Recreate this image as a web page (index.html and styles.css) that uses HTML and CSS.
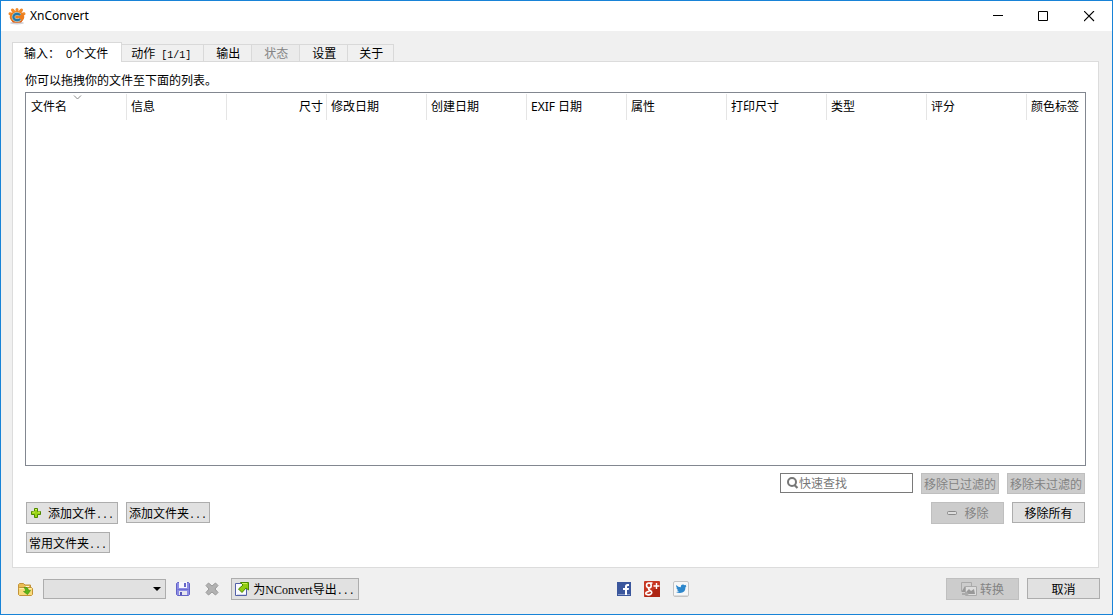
FILE: index.html
```html
<!DOCTYPE html>
<html lang="zh-CN">
<head>
<meta charset="utf-8">
<meta name="viewport" content="width=device-width, initial-scale=1">
<title>XnConvert</title>
<link rel="stylesheet" href="styles.css">
</head>
<body>
<div class="window">
  <header class="titlebar">
    <svg class="app-icon" width="18" height="18" viewBox="0 0 18 18" aria-hidden="true">
      <ellipse cx="9" cy="16" rx="7" ry="1.5" fill="#d3d3d8"/>
      <g stroke="#f08a2a" stroke-width="3" stroke-linecap="round"><path d="M9 9V2.500M9 9L4.500 3M9 9L13.500 3M9 9L2 6.800M9 9L16 6.800"/></g>
      <ellipse cx="9" cy="10" rx="7.300" ry="5.600" fill="#ee7d1b"/>
      <path d="M3 13Q9 17 15 13L13 15.500H5Z" fill="#d9540f"/>
      <path d="M12 8.200A3.600 3.200 0 1 0 12 11.800" fill="none" stroke="#bcc8be" stroke-width="3.600"/>
      <path d="M12 8.200A3.600 3.200 0 1 0 12 11.800" fill="none" stroke="#2479a8" stroke-width="2.200"/>
    </svg>
    <h1 class="title">XnConvert</h1>
    <div class="caption-buttons">
      <button class="caption" aria-label="最小化"><svg width="11" height="11" viewBox="0 0 11 11"><path d="M1 4.500H11" stroke="#000"/></svg></button>
      <button class="caption" aria-label="最大化"><svg width="11" height="11" viewBox="0 0 11 11"><path d="M.5.500H9.500V9.500H.5Z" fill="none" stroke="#000"/></svg></button>
      <button class="caption" aria-label="关闭"><svg width="11" height="11" viewBox="0 0 11 11"><path d="M0 0L10 10M10 0L0 10" stroke="#000" stroke-width="1.100"/></svg></button>
    </div>
  </header>

  <main class="workspace">
    <div class="tabs" role="tablist">
      <button class="tab tab-active" role="tab" aria-selected="true">输入：<span class="latin"> </span><span class="digit">0</span>个文件</button>
      <button class="tab" role="tab">动作<span class="latin"> [1/1]</span></button>
      <button class="tab" role="tab">输出</button>
      <button class="tab" role="tab" disabled>状态</button>
      <button class="tab" role="tab">设置</button>
      <button class="tab" role="tab">关于</button>
    </div>

    <section class="panel" role="tabpanel">
      <p class="hint">你可以拖拽你的文件至下面的列表。</p>
      <div class="file-list">
        <table class="files">
          <thead>
            <tr>
              <th class="col sorted">文件名<svg class="sort" width="9" height="5" viewBox="0 0 9 5" aria-hidden="true"><path d="M1 .5L4.500 4L8 .5" fill="none" stroke="#8a8a8a"/></svg></th>
              <th class="col">信息</th>
              <th class="col col-size">尺寸</th>
              <th class="col">修改日期</th>
              <th class="col">创建日期</th>
              <th class="col">EXIF 日期</th>
              <th class="col">属性</th>
              <th class="col">打印尺寸</th>
              <th class="col">类型</th>
              <th class="col">评分</th>
              <th class="col col-last">颜色标签</th>
            </tr>
          </thead>
        </table>
      </div>

      <div class="filter-row">
        <label class="search">
          <svg width="12" height="12" viewBox="0 0 12 12" aria-hidden="true"><circle cx="5" cy="5" r="4" fill="none" stroke="#777" stroke-width="2"/><path d="M7.500 8L10.500 11" stroke="#777" stroke-width="2.200"/></svg>
          <input class="search-input" type="text" placeholder="快速查找" aria-label="快速查找">
        </label>
        <button class="btn btn-filter" disabled>移除已过滤的</button>
        <button class="btn btn-filter" disabled>移除未过滤的</button>
      </div>

      <div class="action-row">
        <button class="btn btn-tall btn-add">
          <svg class="icon-plus" width="12" height="12" viewBox="0 0 12 12" aria-hidden="true"><path d="M4.500 1.500H7.500V4.500H10.500V7.500H7.500V10.500H4.500V7.500H1.500V4.500H4.500Z" fill="#9bd516" stroke="#4c8800"/><path d="M5 2.500H7M2.500 5H5M8 5H10" stroke="#d6f260"/></svg>
          <span>添加文件<span class="latin">...</span></span>
        </button>
        <button class="btn btn-folder"><span>添加文件夹<span class="latin">...</span></span></button>
        <div class="spacer"></div>
        <button class="btn btn-tall btn-std btn-remove" disabled>
          <svg width="12" height="12" viewBox="0 0 12 12" aria-hidden="true"><rect x="1.500" y="4.500" width="9" height="3" rx="1" fill="#ddd" stroke="#888"/></svg>
          <span>移除</span>
        </button>
        <button class="btn btn-std">移除所有</button>
      </div>
      <div class="action-row">
        <button class="btn btn-folder"><span>常用文件夹<span class="latin">...</span></span></button>
      </div>
    </section>
  </main>

  <footer class="footer">
    <div class="presets">
      <button class="icon-btn icon-open" aria-label="打开">
        <svg width="16" height="16" viewBox="0 0 16 16"><path d="M1.500 13.500V3.500L2.500 2.500H6.500L8 4H13.500V7" fill="#e9bd55" stroke="#c39338"/><path d="M3 6H8L9 5H12V6" fill="#fff7d2"/><path d="M1.500 13.500V7.500L2.500 6.500H14.500L15.500 7.500V13.500L14.500 14.500H2.500Z" fill="#f8da7c" stroke="#c39338"/><path d="M2.500 7.500H14.500" stroke="#fff0a8"/><path d="M7 6.500Q11 5.500 11.500 9.500H13.500L10.500 13.500L6.500 10.500H8.500Q8.800 8 7 6.500Z" fill="#5cb516" stroke="#38910a" stroke-width=".6"/></svg>
      </button>
      <div class="combo">
        <select class="combo-box" aria-label="预设"><option></option></select>
        <svg class="combo-arrow" width="8" height="4" viewBox="0 0 8 4" aria-hidden="true"><path d="M0 0H8L4 4Z" fill="#000"/></svg>
      </div>
      <button class="icon-btn icon-save" aria-label="保存">
        <svg width="14" height="14" viewBox="0 0 14 14"><path d="M.5 1.500L1.500.500H12.500L13.500 1.500V12.500L12.500 13.500H1.500L.5 12.500Z" fill="#8c8ce4" stroke="#6363c6"/><rect x="3" y="0" width="8" height="6" fill="#f8f8fd"/><rect x="8" y="1" width="2" height="4" fill="#6666c7"/><path d="M1.500 7.500H12.500" stroke="#6e6ed2"/><rect x="3" y="9" width="8" height="4" fill="#e6e6ef"/><rect x="4" y="10" width="2" height="3" fill="#5757b5"/></svg>
      </button>
      <button class="icon-btn icon-delete" aria-label="删除" disabled>
        <svg width="14" height="14" viewBox="0 0 14 14"><path d="M3.500 1L7 4L10.500 1L13 3.500L10 7L13 10.500L10.500 13L7 10L3.500 13L1 10.500L4 7L1 3.500Z" fill="#b2b2b2" stroke="#999" stroke-linejoin="round"/></svg>
      </button>
      <button class="btn btn-tall btn-export">
        <svg width="14" height="16" viewBox="0 0 14 16" aria-hidden="true"><path d="M.5 2.500H11.500V14.500H.5Z" fill="#fafaff" stroke="#5260a8"/><path d="M2 13.500H11" stroke="#d6d9e8"/><path d="M5.500 1.500H13.500V9L11 7L7 11.500L3.500 8L8 4Z" fill="#91cc10" stroke="#4b8a00"/><path d="M7 2.500H12" stroke="#cdf055"/></svg>
        <span>为<span class="serif">NConvert</span>导出<span class="latin">...</span></span>
      </button>
    </div>

    <nav class="social">
      <a href="#facebook" aria-label="Facebook"><svg width="14" height="14" viewBox="0 0 14 14"><rect width="14" height="14" fill="#3b579d"/><rect x="1" y="12" width="12" height="1" fill="#8b9dc9"/><path d="M8 13V8H6V6H8V4.500Q8 2 10.500 2H12V4H11Q10 4 10 5V6H12L11.700 8H10V13Z" fill="#fff"/></svg></a>
      <a href="#google-plus" aria-label="Google+"><svg width="16" height="16" viewBox="0 0 16 16"><rect width="16" height="16" rx="1" fill="#c73722"/><path d="M0 16L16 4V16Z" fill="#ad2514"/><path d="M8.500 2H4.800M4.800 2A2.300 2.400 0 1 0 4.900 6.800A2.300 2.400 0 0 0 4.900 2M5 7Q4 8.500 6 9.500Q9 11.200 7 13Q4.500 14.800 2 13Q.8 11 5.500 10.200" fill="none" stroke="#fff" stroke-width="1.600"/><path d="M12.500 2V8M9.500 5H15.500" stroke="#fff" stroke-width="1.400"/></svg></a>
      <a href="#twitter" aria-label="Twitter"><svg width="16" height="16" viewBox="0 0 16 16"><rect x=".5" y=".5" width="15" height="15" rx="1.500" fill="#f7f7f7" stroke="#c4c4c4"/><path d="M1 14.500H15" stroke="#ddd"/><path d="M3.200 4Q5.200 6.200 7.800 6.200Q7.600 3.500 10 3.500Q11 3.500 11.700 4.200L13.300 3.700L12.700 5L13.500 5L12.500 6.200Q12.400 11.800 7 12Q4.600 12 3 11Q4.800 11 6 10.200Q4.400 9.800 4 8.700H5Q3.400 8 3.300 6.600L4.200 6.800Q2.600 5.500 3.200 4Z" fill="#2d87cc"/></svg></a>
    </nav>

    <div class="commands">
      <button class="btn btn-tall btn-std btn-convert" disabled>
        <svg width="16" height="14" viewBox="0 0 16 14" aria-hidden="true"><path d="M.5.500H10.500V9.500H.5Z" fill="#ccc" stroke="#aaa"/><path d="M1 9L4 4L7 8V10H1Z" fill="#999"/><path d="M4.500 4.500H15.500V13.500H4.500Z" fill="#ddd" stroke="#aaa"/><path d="M6 12V9L8 7L10 9L13 7L14 12Z" fill="#999"/><path d="M1 11H5V9L8 12L5 14V13H1Z" fill="#aaa"/></svg>
        <span>转换</span>
      </button>
      <button class="btn btn-std">取消</button>
    </div>
  </footer>
</div>
</body>
</html>
```
FILE: styles.css
```css
* {
  box-sizing: border-box;
}

body {
  margin: 0;
  font: 12px/16px "Noto Sans CJK SC", sans-serif;
  color: #000;
}

button,
input,
select {
  margin: 0;
  padding: 0;
  font: inherit;
  color: inherit;
}

svg {
  display: block;
  flex: none;
}

.latin {
  font-family: "Liberation Mono", monospace;
  font-size: 10px;
  line-height: 1;
  white-space: pre;
}

.digit {
  font-family: "Liberation Sans", sans-serif;
  font-size: 11px;
  line-height: 1;
}

.serif {
  font-family: "Liberation Serif", serif;
  line-height: 1;
}

.window {
  display: flex;
  flex-direction: column;
  min-height: 100vh;
  border: 1px solid #1883d7;
  background: #f0f0f0;
}

/* Title bar */
.titlebar {
  display: flex;
  align-items: center;
  height: 30px;
  padding-left: 7px;
  background: #fff;
}

.title {
  flex: 1;
  margin: 0 0 0 4px;
  font: 12px/16px "Noto Sans", sans-serif;
}

.caption-buttons {
  display: flex;
}

.caption {
  display: flex;
  align-items: center;
  justify-content: center;
  width: 46px;
  height: 30px;
  border: 0;
  background: none;
}

/* Tabs */
.workspace {
  flex: 1;
  display: flex;
  flex-direction: column;
  padding: 11px 13px 0 11px;
}

.tabs {
  display: flex;
  align-items: flex-end;
  margin-bottom: -1px;
}

.tab {
  height: 18px;
  padding: 0 11px 0 12px;
  border: 1px solid #d9d9d9;
  border-left: 0;
  background: #f0f0f0;
  line-height: 16px;
  white-space: nowrap;
}

.tab:nth-child(2) {
  padding: 0 12px 0 9px;
}

.tab:last-child {
  padding: 0 10px 0 11px;
}

.tab:disabled {
  color: #848484;
  background: #ebebeb;
}

.tab-active {
  height: 20px;
  padding: 0 13px 0 11px;
  border-left: 1px solid #d9d9d9;
  border-bottom: 0;
  background: #fff;
  line-height: 18px;
}

/* Input panel */
.panel {
  flex: 1;
  display: flex;
  flex-direction: column;
  padding: 10px 12px 13px;
  border: 1px solid #dcdcdc;
  background: #fff;
}

.tabs,
.tab {
  position: relative;
}

.panel > .hint {
  margin: 0 0 4px;
}

.file-list {
  flex: 1;
  min-height: 120px;
  padding-top: 1px;
  border: 1px solid #828790;
  background: #fff;
  overflow: hidden;
}

.files {
  width: 100%;
  table-layout: fixed;
  border-collapse: separate;
  border-spacing: 0;
}

.col {
  position: relative;
  width: 100px;
  height: 26px;
  padding: 0 3px 0 4px;
  border-left: 1px solid #e5e5e5;
  font: 12px/16px "Noto Sans", "Noto Sans CJK SC", sans-serif;
  text-align: left;
  white-space: nowrap;
}

.sorted {
  border-left-color: transparent;
}

.col-size {
  text-align: right;
}

.col-last {
  width: auto;
}

.sort {
  position: absolute;
  top: 1px;
  left: 46px;
}

/* Buttons */
.btn {
  display: inline-flex;
  align-items: center;
  justify-content: center;
  height: 21px;
  border: 1px solid #adadad;
  background: #e1e1e1;
  white-space: nowrap;
}

.btn:disabled {
  border-color: #bfbfbf;
  background: #ccc;
  color: #838383;
}

.btn-tall {
  height: 22px;
}

.btn-std {
  width: 73px;
}

.btn-filter {
  width: 78px;
}

.btn-folder {
  width: 84px;
}

.btn-add {
  width: 92px;
  gap: 6px;
}

.btn-remove {
  gap: 6px;
}

.btn-export {
  width: 128px;
  gap: 4px;
}

.btn-convert {
  gap: 3px;
}

.filter-row {
  display: flex;
  justify-content: flex-end;
  gap: 8px;
  margin: 7px 0 8px;
  padding-right: 1px;
}

.search {
  display: flex;
  align-items: center;
  width: 133px;
  height: 20px;
  padding-left: 6px;
  border: 1px solid #7a7a7a;
  background: #fff;
}

.search-input {
  flex: 1;
  min-width: 0;
  border: 0;
  outline: 0;
  background: none;
}

.search-input::placeholder {
  color: #777;
  opacity: 1;
}

.action-row {
  display: flex;
  align-items: flex-start;
  gap: 8px;
  min-height: 22px;
  padding: 0 1px;
}

.action-row + .action-row {
  margin-top: 8px;
}

.spacer {
  flex: 1;
}

/* Footer */
.footer {
  display: flex;
  align-items: flex-start;
  justify-content: space-between;
  padding: 10px 12px 14px 16px;
}

.presets,
.social {
  display: flex;
  align-items: center;
}

.icon-btn {
  border: 0;
  background: none;
}

.icon-open {
  margin-right: 10px;
}

.icon-save {
  margin: 0 15px 0 10px;
}

.icon-delete {
  margin-right: 12px;
}

.combo {
  position: relative;
  width: 123px;
  height: 20px;
}

.combo-box {
  display: block;
  width: 100%;
  height: 100%;
  border: 1px solid #adadad;
  border-radius: 0;
  background: #e1e1e1;
  appearance: none;
}

.combo-arrow {
  position: absolute;
  top: 8px;
  right: 5px;
  pointer-events: none;
}

.social {
  gap: 13px;
  height: 22px;
}

.commands {
  display: flex;
  align-items: flex-start;
  gap: 8px;
}
```
